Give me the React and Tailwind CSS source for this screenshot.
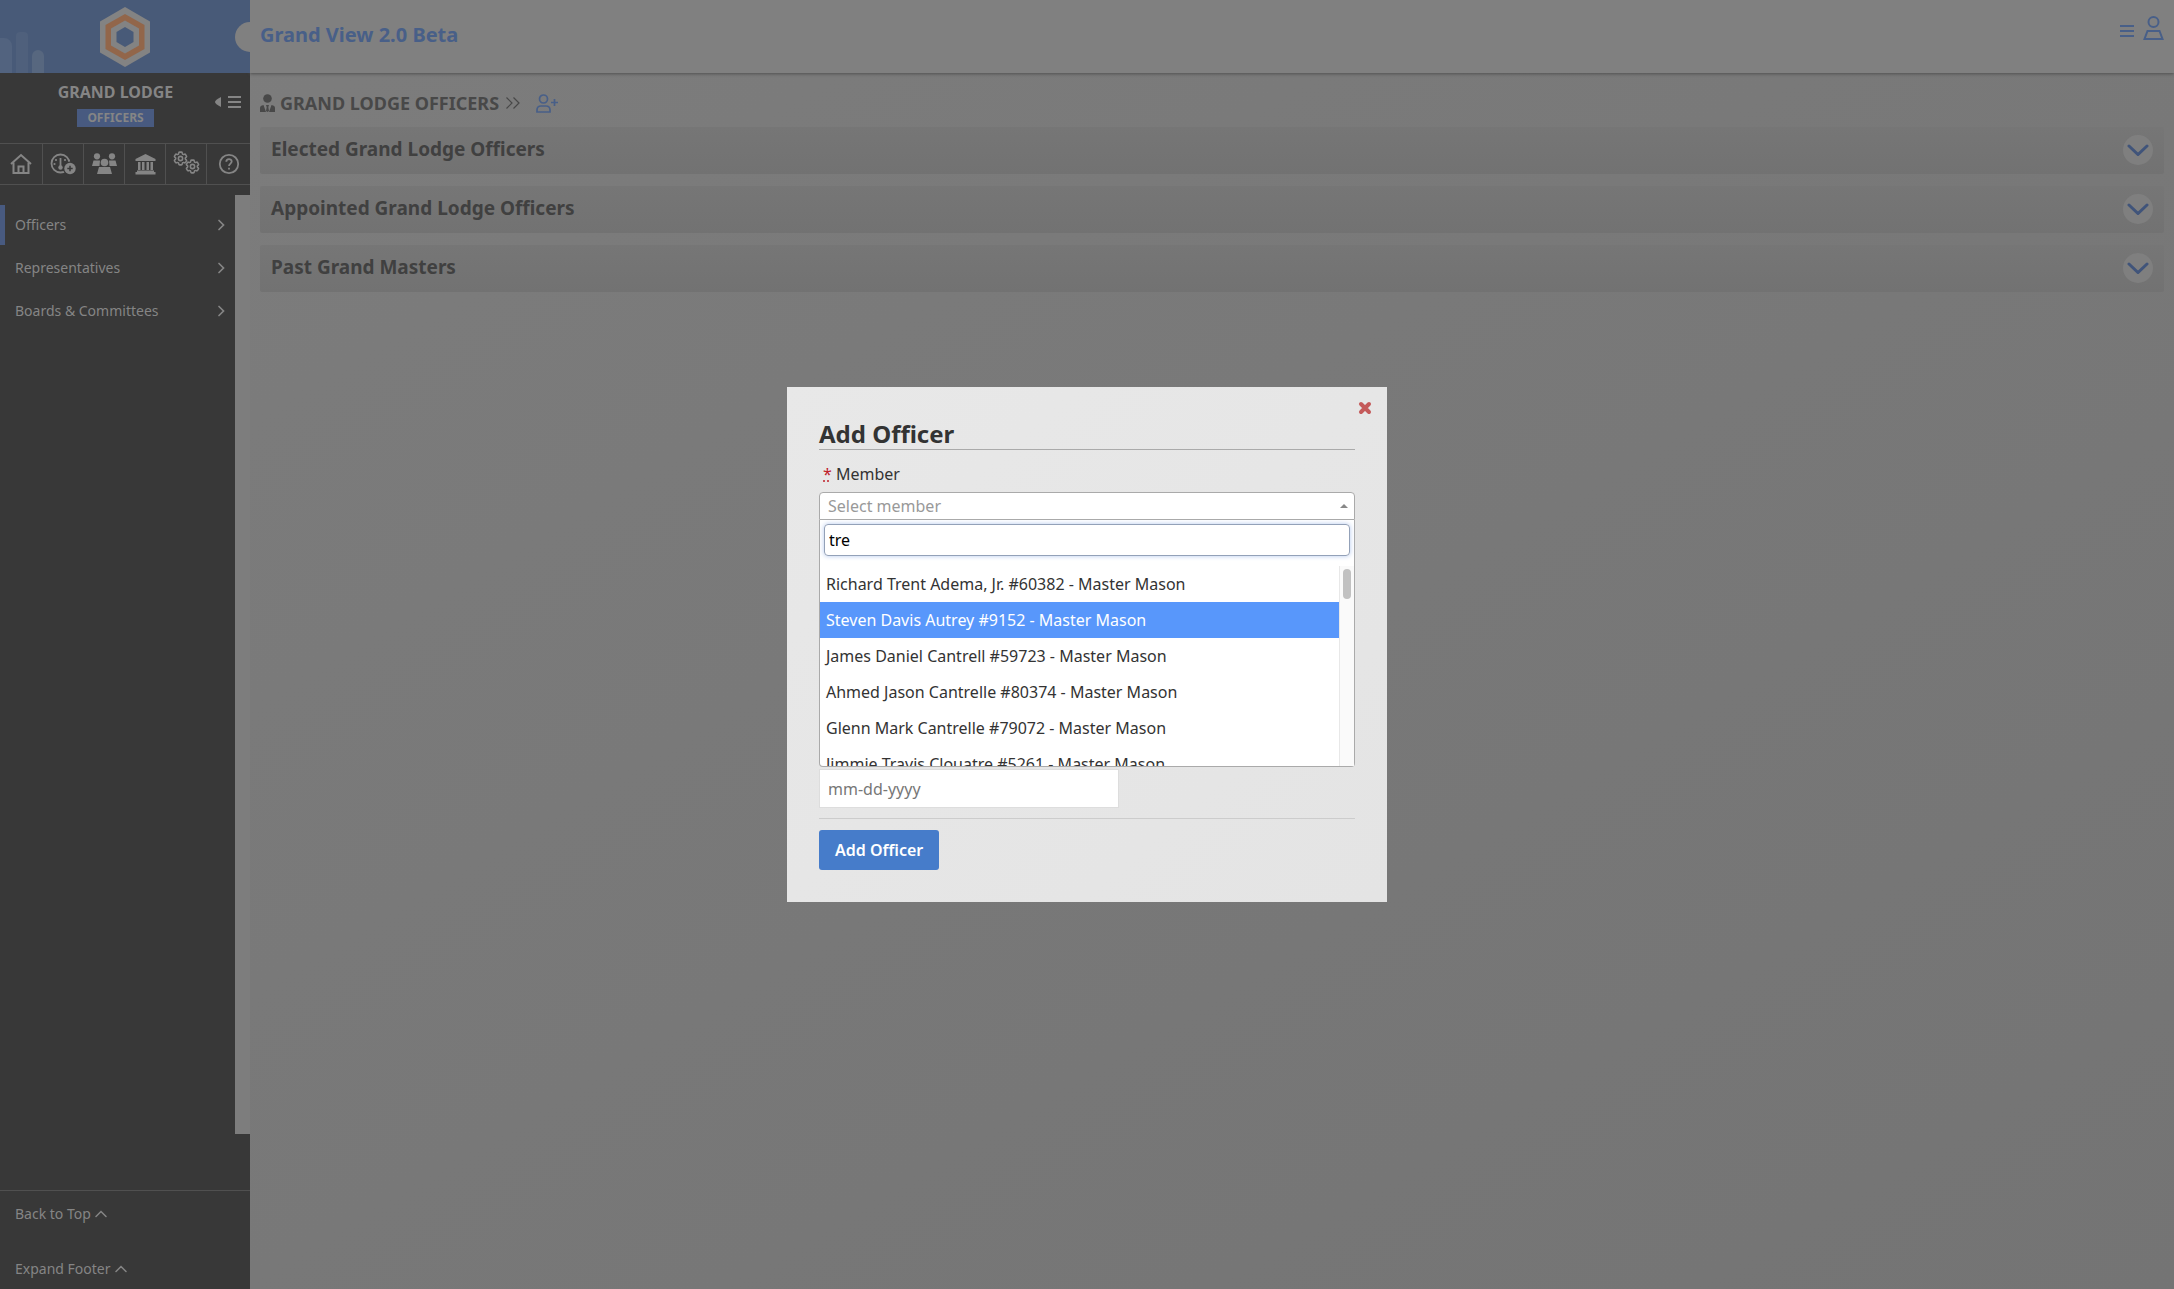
import { useState } from 'react';
import { HiOutlineCog6Tooth } from 'react-icons/hi2';

const SECTIONS = [
  'Elected Grand Lodge Officers',
  'Appointed Grand Lodge Officers',
  'Past Grand Masters',
];

const NAV_ITEMS = ['Officers', 'Representatives', 'Boards & Committees'];

const MEMBERS = [
  'Richard Trent Adema, Jr. #60382 - Master Mason',
  'Steven Davis Autrey #9152 - Master Mason',
  'James Daniel Cantrell #59723 - Master Mason',
  'Ahmed Jason Cantrelle #80374 - Master Mason',
  'Glenn Mark Cantrelle #79072 - Master Mason',
  'Jimmie Travis Clouatre #5261 - Master Mason',
];

const Logo = () => (
  <svg className="h-[60px] w-[50px]" viewBox="0 0 50 60">
    <path d="M25 0L50 14.5V45.5L25 60L0 45.5V14.5Z" fill="#838383" />
    <path d="M25 7L44.5 18V42L25 53L5.500 42V18Z" fill="#92664a" />
    <path d="M25 13.500L39 21.500V38.500L25 46.500L11 38.500V21.500Z" fill="#838383" />
    <path d="M25 20L33.500 25V35L25 40L16.500 35V25Z" fill="#485a78" />
  </svg>
);

const HomeIcon = () => (
  <svg className="h-[22px] w-[22px]" viewBox="0 0 22 22" fill="none" stroke="currentColor" strokeWidth="2">
    <path d="M1 11L11 2L21 11" />
    <path d="M3.500 9.500V20H18.500V9.500" />
    <path d="M8.500 20V13.500H13.500V20" />
  </svg>
);

const DashboardIcon = () => (
  <svg className="h-[22px] w-[26px]" viewBox="0 0 26 22" fill="none">
    <circle cx="10.500" cy="10.500" r="9" stroke="currentColor" strokeWidth="1.800" />
    <path d="M10.500 5V14" stroke="currentColor" strokeWidth="1.800" />
    <circle cx="10.500" cy="14.500" r="2.200" fill="currentColor" />
    <circle cx="6" cy="7" r="1.100" fill="currentColor" />
    <circle cx="15" cy="7" r="1.100" fill="currentColor" />
    <circle cx="4.500" cy="11" r="1.100" fill="currentColor" />
    <circle cx="20" cy="15.500" r="7" fill="#383838" />
    <circle cx="20" cy="15.500" r="5.700" fill="currentColor" />
    <path d="M20 12.800V18.200M17.300 15.500H22.700" stroke="#383838" strokeWidth="1.500" />
  </svg>
);

const GroupIcon = () => (
  <svg className="h-[22px] w-[25px]" viewBox="0 0 25 22" fill="currentColor">
    <circle cx="5" cy="3.300" r="3.100" />
    <circle cx="20" cy="3.300" r="3.100" />
    <path d="M1.500 7.500H8L7.500 13H0Z" />
    <path d="M17 7.500H23.500L25 13H17.500Z" />
    <circle cx="12.500" cy="9.500" r="3.800" />
    <path d="M7 14H18L20 21H5Z" />
  </svg>
);

const BankIcon = () => (
  <svg className="h-[21px] w-[21px]" viewBox="0 0 21 21" fill="currentColor">
    <path d="M10.500 0L20.500 5V7H0.500V5Z" />
    <path d="M3 8H5.500V16H3ZM7 8H9.500V16H7ZM11.500 8H14V16H11.500ZM15.500 8H18V16H15.500Z" />
    <path d="M2 16.500H19V18H20.500V20.500H0.500V18H2Z" />
  </svg>
);

const GearsIcon = () => (
  <span className="flex">
    <HiOutlineCog6Tooth className="-mt-1 size-[17px]" strokeWidth="2.200" />
    <HiOutlineCog6Tooth className="-ml-[5px] mt-1 size-[17px]" strokeWidth="2.200" />
  </span>
);

const HelpIcon = () => (
  <svg className="h-[22px] w-[22px]" viewBox="0 0 22 22" fill="none" stroke="currentColor" strokeWidth="1.800">
    <circle cx="11" cy="11" r="9.200" />
    <path d="M8.300 8.700C8.300 5.300 13.700 5.300 13.700 8.600C13.700 10.500 11 10.700 11 13" />
    <path d="M11 14.800V16.600" />
  </svg>
);

const CollapseIcon = () => (
  <svg className="h-[14px] w-[27px]" viewBox="0 0 27 14" fill="currentColor">
    <path d="M6 2V12Q0 9 0 7Q0 5 6 2Z" />
    <path d="M13 1H26V3H13ZM13 6H26V8H13ZM13 11H26V13H13Z" />
  </svg>
);

const OfficerIcon = () => (
  <svg className="h-[18px] w-[15px]" viewBox="0 0 15 18" fill="currentColor">
    <circle cx="7.500" cy="4.500" r="4.300" />
    <path d="M3.500 11L6 18H0V14Q0 11.500 3.500 11ZM11.500 11L9 18H15V14Q15 11.500 11.500 11ZM6 11H9L8.300 13L9 17L7.500 18L6 17L6.700 13Z" />
  </svg>
);

const AddUserIcon = () => (
  <svg className="h-[19px] w-[22px]" viewBox="0 0 22 19" fill="none" stroke="currentColor" strokeWidth="1.700">
    <circle cx="7.500" cy="5" r="4" />
    <path d="M1 18V16Q1 12 5 12H10Q14 12 14 16V18Z" />
    <path d="M18.500 5V12M15 8.500H22" />
  </svg>
);

const ProfileIcon = () => (
  <svg className="h-6 w-[21px]" viewBox="0 0 21 24" fill="none" stroke="currentColor" strokeWidth="2">
    <circle cx="10.500" cy="6" r="5" />
    <path d="M4.500 15H16.500L19.500 23H1.500Z" />
  </svg>
);

const Chevron = ({ className, d, width = 1.5 }) => (
  <svg className={className} viewBox="0 0 12 12" fill="none" stroke="currentColor" strokeWidth={width} strokeLinecap="round">
    <path d={d} />
  </svg>
);

const TOOLS = [
  { label: 'Home', Icon: HomeIcon },
  { label: 'Dashboard', Icon: DashboardIcon },
  { label: 'Members', Icon: GroupIcon },
  { label: 'Lodges', Icon: BankIcon },
  { label: 'Settings', Icon: GearsIcon },
  { label: 'Help', Icon: HelpIcon },
];

const Sidebar = () => (
  <aside className="flex w-[250px] shrink-0 flex-col bg-[#383838] text-[#858585]">
    <div className="relative flex h-[73px] items-center justify-center overflow-hidden bg-[#485a78]">
      {/* Bars in the corner of the banner */}
      <div className="absolute bottom-0 left-0 flex items-end gap-1">
        <div className="h-[35px] w-3 rounded-tr-lg bg-[#52637f]" />
        <div className="h-[41px] w-3 rounded-t-sm bg-[#4f607c]" />
        <div className="h-[23px] w-3 rounded-t-md bg-[#57677f]" />
      </div>
      <Logo />
      <div className="absolute -right-[15px] top-[22px] size-[30px] rounded-full bg-[#808080]" />
    </div>

    <div className="flex h-[70px] items-start pt-[7px]">
      <div className="flex flex-1 flex-col items-center pl-4">
        <h2 className="text-base leading-6 font-bold">GRAND LODGE</h2>
        <span className="mt-[5px] bg-[#485a80] px-[10px] text-xs leading-[18px] font-bold">OFFICERS</span>
      </div>
      <button aria-label="Collapse menu" className="mt-[15px] mr-2">
        <CollapseIcon />
      </button>
    </div>

    <div className="grid h-[42px] grid-cols-[43px_repeat(4,41px)_1fr] divide-x divide-[#505050] border-y border-[#505050]">
      {TOOLS.map(({ label, Icon }) => (
        <button key={label} aria-label={label} className="flex items-center justify-center">
          <Icon />
        </button>
      ))}
    </div>

    <div className="mt-[10px] flex-1 bg-[#7d7d7d] pr-[15px]">
      <nav className="h-full bg-[#383838] pt-[10px] text-sm">
        {NAV_ITEMS.map((item, i) => (
          <a
            key={item}
            href="#"
            className={`mb-[3px] flex h-10 items-center justify-between border-l-[5px] pr-2 pl-[10px] ${
              i === 0 ? 'border-[#485a80]' : 'border-transparent'
            }`}
          >
            {item}
            <Chevron className="size-3" d="M4 1.500L8.500 6L4 10.500" width={1.7} />
          </a>
        ))}
      </nav>
    </div>

    <div className="mt-14 flex flex-col gap-[35px] border-t border-[#505050] px-[15px] pt-[13px] pb-[10px] text-sm leading-5">
      <a href="#" className="flex items-center gap-1">
        Back to Top
        <Chevron className="size-3" d="M1 8.500L6 3.500L11 8.500" />
      </a>
      <a href="#" className="flex items-center gap-1">
        Expand Footer
        <Chevron className="size-3" d="M1 8.500L6 3.500L11 8.500" />
      </a>
    </div>
  </aside>
);

const AddOfficerModal = () => {
  const [search, setSearch] = useState('tre');
  const [active, setActive] = useState(1);

  return (
    <div
      role="dialog"
      aria-labelledby="add-officer-title"
      className="relative w-[600px] bg-linear-to-br from-[#e8e8e8] to-[#e4e4e4] p-8 text-base text-[#333]"
    >
      <button aria-label="Close" className="absolute top-[14px] right-[15px] text-[#c45a5a]">
        <svg className="size-[14px]" viewBox="0 0 14 14" stroke="currentColor" strokeWidth="4" strokeLinecap="round">
          <path d="M3 3L11 11M11 3L3 11" />
        </svg>
      </button>

      <h2 id="add-officer-title" className="border-b border-[#aaa] text-2xl leading-[30px] font-bold">
        Add Officer
      </h2>

      <label htmlFor="member" className="mt-3 block pl-1 leading-6">
        <abbr title="required" className="text-[#c0202a] underline decoration-dotted">*</abbr> Member
      </label>

      <div className="relative mt-[6px]">
        <select
          id="member"
          className="block h-7 w-full appearance-none rounded-t border border-[#aaa] bg-white px-2 leading-[26px] text-[#999]"
        >
          <option>Select member</option>
        </select>
        <svg className="pointer-events-none absolute top-3 right-[7px] h-1 w-2" viewBox="0 0 8 4" fill="#888">
          <path d="M0 4L4 0L8 4Z" />
        </svg>
      </div>

      <div className="rounded-b border border-t-0 border-[#aaa] bg-white">
        <div className="p-1">
          <input
            type="search"
            aria-label="Search members"
            value={search}
            onChange={(e) => setSearch(e.target.value)}
            className="block h-8 w-full rounded border border-[#93a1b8] px-1 text-black shadow-[0_0_5px_#b4c8ee] outline-none"
          />
        </div>
        <div className="mt-[6px] flex h-[200px]">
          <ul role="listbox" aria-label="Members" className="flex-1 overflow-y-auto [scrollbar-width:none]">
            {MEMBERS.map((member, i) => (
              <li
                key={member}
                role="option"
                aria-selected={i === active}
                onMouseEnter={() => setActive(i)}
                className={`h-9 px-[6px] leading-9 ${i === active ? 'bg-[#5897fb] text-white' : ''}`}
              >
                {member}
              </li>
            ))}
          </ul>
          <div className="w-[15px] border-l border-[#e8e8e8] bg-[#fafafa] px-[3px] pt-[3px]">
            <div className="h-[30px] rounded-full bg-[#c1c1c1]" />
          </div>
        </div>
      </div>

      <input
        type="text"
        aria-label="Date"
        placeholder="mm-dd-yyyy"
        className="mt-[2px] block h-[39px] w-[300px] border border-[#ddd] bg-white px-2 placeholder:text-[#777]"
      />

      <hr className="mt-[10px] border-[#ccc]" />

      <button className="mt-[11px] block h-10 rounded-[3px] bg-[#467cca] px-4 font-semibold text-white">
        Add Officer
      </button>
    </div>
  );
};

const App = () => {
  return (
    <div className="flex min-h-screen bg-linear-to-br from-[#7d7d7d] to-[#747474] font-['Noto_Sans',sans-serif]">
      <Sidebar />

      <div className="min-w-0 flex-1">
        {/* Header */}
        <header className="flex h-[73px] items-center justify-between bg-[#808080] px-[10px] text-[#485f88] shadow-[0_1px_3px_#505050]">
          <h1 className="pb-1 text-xl font-bold">Grand View 2.0 Beta</h1>
          <div className="flex items-center gap-[9px] pb-[18px]">
            <button aria-label="Menu" className="pt-[6px]">
              <svg className="h-3 w-[14px]" viewBox="0 0 14 12" fill="currentColor">
                <path d="M0 0H14V2H0ZM0 5H14V7H0ZM0 10H14V12H0Z" />
              </svg>
            </button>
            <button aria-label="Profile">
              <ProfileIcon />
            </button>
          </div>
        </header>

        <main className="px-[10px] pt-4">
          <div className="flex h-7 items-center text-[#484848]">
            <OfficerIcon />
            <h2 className="ml-[5px] text-lg font-bold">GRAND LODGE OFFICERS</h2>
            <svg className="ml-[7px] h-3 w-[14px]" viewBox="0 0 14 12" fill="none" stroke="currentColor" strokeWidth="1.200">
              <path d="M0.500 0.500L6 6L0.500 11.500M7.500 0.500L13 6L7.500 11.500" />
            </svg>
            <button aria-label="Add officer" className="ml-4 text-[#485f88]">
              <AddUserIcon />
            </button>
          </div>

          {/* Officer groups */}
          <div className="mt-[10px] flex flex-col gap-3">
            {SECTIONS.map((title) => (
              <section
                key={title}
                className="flex h-[47px] items-center justify-between rounded-xs bg-linear-to-b from-[#767676] to-[#727272] pr-[11px] pb-[2px] pl-[11px]"
              >
                <h3 className="text-[19px] font-bold text-[#404040]">{title}</h3>
                <button
                  aria-label={`Expand ${title}`}
                  className="flex size-[30px] items-center justify-center rounded-full bg-[#7f7f7f] text-[#40547a]"
                >
                  <svg className="h-3 w-[22px]" viewBox="0 0 22 12" fill="none" stroke="currentColor" strokeWidth="3" strokeLinecap="round">
                    <path d="M2 2L11 10.500L20 2" />
                  </svg>
                </button>
              </section>
            ))}
          </div>
        </main>
      </div>

      <div className="fixed inset-0 flex items-center justify-center">
        <AddOfficerModal />
      </div>
    </div>
  );
};

export default App;
